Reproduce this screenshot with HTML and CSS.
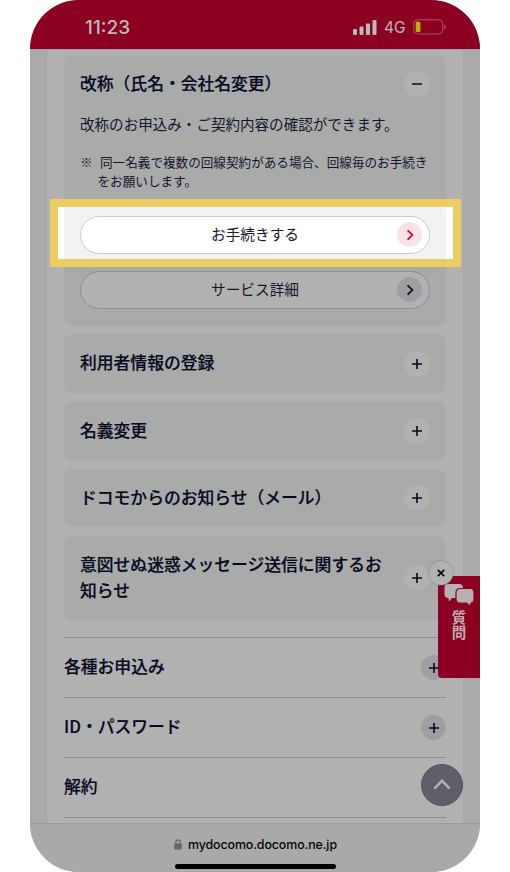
FILE: index.html
```html
<!DOCTYPE html>
<html lang="ja">
<head>
<meta charset="utf-8">
<meta name="viewport" content="width=device-width, initial-scale=1">
<title>My docomo お手続き</title>
<link rel="stylesheet" href="styles.css">
</head>
<body>

<div class="phone">
  <header class="status">
    <span class="time">11:23</span>
    <svg class="signal" width="24" height="15" viewBox="0 0 24 15">
      <rect x="0" y="9" width="4" height="6" rx="1"/>
      <rect x="6.5" y="6.5" width="4" height="8.5" rx="1"/>
      <rect x="13" y="3.5" width="4" height="11.5" rx="1"/>
      <rect x="19.5" y="0" width="4" height="15" rx="1"/>
    </svg>
    <span class="network">4G</span>
    <svg class="battery" width="34" height="16" viewBox="0 0 34 16">
      <rect class="case" x="0.75" y="0.75" width="29" height="14.2" rx="4"/>
      <rect class="charge" x="2.7" y="2.6" width="4.8" height="10.6" rx="2"/>
      <path class="cap" d="M31.2 5.2c2 .8 2 4.4 0 5.2z"/>
    </svg>
  </header>

  <main class="page">
    <div class="panel">
      <!-- 開いているメニュー -->
      <section class="card open">
        <div class="head">
          <h2>改称（氏名・会社名変更）</h2>
          <span class="circle"><svg width="12" height="12" viewBox="0 0 12 12"><path d="M1 6h10"/></svg></span>
        </div>
        <p class="lead">改称のお申込み・ご契約内容の確認ができます。</p>
        <p class="note"><span class="mark">※</span>同一名義で複数の回線契約がある場合、回線毎のお手続きをお願いします。</p>
        <div class="highlight">
          <div class="inner">
            <a class="button"><span class="label">お手続きする</span>
              <span class="arrow"><svg width="12" height="12" viewBox="0 0 12 12"><path d="M3.6 1.3L8.4 6l-4.8 4.7"/></svg></span>
            </a>
          </div>
        </div>
        <a class="button dim"><span class="label">サービス詳細</span>
          <span class="arrow"><svg width="12" height="12" viewBox="0 0 12 12"><path d="M3.6 1.3L8.4 6l-4.8 4.7"/></svg></span>
        </a>
      </section>

      <section class="card">
        <div class="head">
          <h2>利用者情報の登録</h2>
          <span class="circle"><svg width="12" height="12" viewBox="0 0 12 12"><path d="M1 6h10M6 1v10"/></svg></span>
        </div>
      </section>
      <section class="card">
        <div class="head">
          <h2>名義変更</h2>
          <span class="circle"><svg width="12" height="12" viewBox="0 0 12 12"><path d="M1 6h10M6 1v10"/></svg></span>
        </div>
      </section>
      <section class="card">
        <div class="head">
          <h2>ドコモからのお知らせ（メール）</h2>
          <span class="circle"><svg width="12" height="12" viewBox="0 0 12 12"><path d="M1 6h10M6 1v10"/></svg></span>
        </div>
      </section>
      <section class="card">
        <div class="head">
          <h2>意図せぬ迷惑メッセージ送信に関するお知らせ</h2>
          <span class="circle"><svg width="12" height="12" viewBox="0 0 12 12"><path d="M1 6h10M6 1v10"/></svg></span>
        </div>
      </section>

      <!-- カテゴリ -->
      <div class="categories">
        <div class="row">
          <h2>各種お申込み</h2>
          <span class="circle gray"><svg width="12" height="12" viewBox="0 0 12 12"><path d="M1 6h10M6 1v10"/></svg></span>
        </div>
        <div class="row">
          <h2>ID・パスワード</h2>
          <span class="circle gray"><svg width="12" height="12" viewBox="0 0 12 12"><path d="M1 6h10M6 1v10"/></svg></span>
        </div>
        <div class="row">
          <h2>解約</h2>
        </div>
        <div class="row"></div>
      </div>
    </div>
  </main>

  <footer class="browser">
    <div class="url">
      <svg width="8" height="11" viewBox="0 0 8 11">
        <rect x="0.3" y="4.6" width="7.4" height="5.9" rx="1"/>
        <path d="M1.9 5V3a2.1 2.1 0 0 1 4.2 0v2"/>
      </svg>
      <span>mydocomo.docomo.ne.jp</span>
    </div>
    <div class="home"></div>
  </footer>

  <!-- 画面に重なるボタン -->
  <div class="question">
    <svg width="31" height="24" viewBox="0 0 31 24">
      <path d="M4 1h11q4 0 4 4v6q0 4-4 4H8l-3 3.500L4.500 15Q.5 15 .5 11V5q0-4 3.500-4z"/>
      <path class="front" d="M16 5.500h10q4 0 4 4v6.500q0 4-3 4l-.5 3.500-4-3.500H16q-4 0-4-4V9.500q0-4 4-4z"/>
    </svg>
    <span>質問</span>
  </div>
  <div class="close"><svg width="8" height="8" viewBox="0 0 8 8"><path d="M.8.8l6.400 6.400M7.200.8L.8 7.200"/></svg></div>
  <div class="pagetop"><svg width="18" height="12" viewBox="0 0 18 12"><path d="M2 9.800l7-7 7 7"/></svg></div>
</div>

</body>
</html>
```

FILE: styles.css
```css
* {
  box-sizing: border-box;
}
body {
  margin: 0;
  background-color: #ffffff;
  color: #14162e;
  font-family: "Noto Sans CJK JP", sans-serif;
}
h2, p {
  margin: 0;
}
h2 {
  color: #07091f;
  font-size: 16.8px;
  line-height: 25.2px;
  font-weight: 500;
  -webkit-text-stroke: 0.2px #07091f;
}
svg {
  display: block;
  flex: none;
}
.phone {
  position: relative;
  display: flex;
  flex-direction: column;
  width: 450px;
  height: 872px;
  margin: 0 auto;
  border-radius: 49px;
  overflow: hidden;
  background-color: #a8abaa;
}

/* ステータスバー */
.status {
  display: flex;
  align-items: center;
  flex: none;
  height: 49px;
  padding: 5px 33px 0 55px;
  background-color: #8c0022;
  color: #bababa;
  font-family: Inter, sans-serif;
}
.time {
  flex: 1;
  font-size: 19px;
  font-weight: 500;
}
.signal {
  fill: #bababa;
}
.network {
  width: 21px;
  margin: 0 8px 0 7px;
  font-size: 15.5px;
}
.case {
  fill: none;
  stroke: #ae5267;
}
.charge {
  fill: #beb000;
}
.cap {
  fill: #ae5267;
}

.page {
  flex: 1;
  min-height: 0;
  overflow: hidden;
  padding: 1px 17px 0;
  box-shadow: inset 0 1px #aba0a2;
}
.panel {
  height: 100%;
  padding: 4.6px 17px 0;
  background-color: #b1b1b1;
  box-shadow: 0 0 2px #9fa2a1;
}
.card {
  margin-bottom: 8.5px;
  border-radius: 8px;
  background-color: #a8abaa;
}
.open {
  height: 271px;
}
.head {
  display: flex;
  align-items: center;
  justify-content: space-between;
  padding: 16.4px 16px 17.2px;
}
.head h2 {
  width: 310px;
}
.circle {
  display: flex;
  align-items: center;
  justify-content: center;
  flex: none;
  width: 26px;
  height: 26px;
  margin: 0 0 -1px;
  border-radius: 50%;
  background-color: #b1b1b2;
}
.circle path {
  fill: none;
  stroke: #07091f;
  stroke-width: 1.6;
}
.gray {
  background-color: #9f9fa3;
}
.lead {
  margin-top: -0.6px;
  padding-left: 16px;
  font-size: 14.56px;
  line-height: 22px;
}
.note {
  padding: 17px 16px 0 33.5px;
  font-size: 12.6px;
  line-height: 19px;
  text-indent: -17.5px;
}
.mark {
  display: inline-block;
  width: 20px;
  text-indent: 0;
}
.highlight {
  height: 68px;
  margin: 9.2px -15px 0 -14px;
  padding: 0 7px 0 6px;
  border: 8px solid #eccd62;
  background-color: #ffffff;
}
.inner {
  height: 52px;
  padding-top: 9px;
  background-color: #f1f2f4;
}
.button {
  display: flex;
  align-items: center;
  justify-content: center;
  position: relative;
  height: 38px;
  margin: 0 16px;
  border: 1px solid #c9c9d0;
  border-radius: 19px;
  background-color: #ffffff;
  font-size: 14.66px;
  line-height: 22px;
}
.label {
  margin-bottom: 2px;
}
.arrow {
  display: flex;
  align-items: center;
  justify-content: center;
  position: absolute;
  right: 7px;
  width: 25px;
  height: 25px;
  border-radius: 50%;
  background-color: #fae3e8;
}
.arrow path {
  fill: none;
  stroke: #cc0020;
  stroke-width: 1.7;
}
.dim {
  margin-top: 4px;
  border-color: #8d8e92;
  background-color: #b1b1b1;
}
.dim .arrow {
  background-color: #9f9fa3;
}
.dim .arrow path {
  stroke: #07091f;
}

.categories {
  margin-top: 17px;
}
.row {
  display: flex;
  align-items: center;
  justify-content: space-between;
  height: 60px;
  border-top: 1px solid #8d8d90;
}
.row h2 {
  margin-bottom: 2px;
}
.row .circle {
  width: 25px;
  height: 25px;
}

/* ブラウザの下部 */
.browser {
  flex: none;
  height: 49px;
  padding-top: 12px;
  border-top: 1px solid #9b9b9b;
  background-color: #a9a9a9;
}
.url {
  display: flex;
  align-items: center;
  justify-content: center;
  gap: 6px;
  height: 16px;
  padding-left: 1px;
  color: #050505;
  font-family: Inter, sans-serif;
  font-size: 12.4px;
  font-weight: 500;
  letter-spacing: -0.1px;
}
.url rect {
  fill: #656569;
}
.url path {
  fill: none;
  stroke: #656569;
  stroke-width: 1.2;
}
.home {
  width: 161px;
  height: 5px;
  margin: 12px auto 0;
  border-radius: 3px;
  background-color: #000000;
}

.question {
  position: absolute;
  top: 575.5px;
  right: 0;
  display: flex;
  flex-direction: column;
  align-items: center;
  width: 42px;
  height: 102px;
  padding-top: 7px;
  border-radius: 4px 0 0 4px;
  background-color: #8c0022;
}
.question path {
  fill: #b5b1b2;
}
.question .front {
  stroke: #8c0022;
  stroke-width: 1.2;
}
.question span {
  margin-top: 3px;
  color: #b9aeb1;
  font-size: 14.5px;
  line-height: 15px;
  letter-spacing: 1px;
  font-weight: bold;
  writing-mode: vertical-rl;
}
.close {
  position: absolute;
  top: 561px;
  left: 399px;
  display: flex;
  align-items: center;
  justify-content: center;
  width: 24px;
  height: 24px;
  border-radius: 50%;
  background-color: #b1b1b1;
  box-shadow: 0 0 2px #777777;
}
.close path {
  fill: none;
  stroke: #080808;
  stroke-width: 1.7;
}
.pagetop {
  position: absolute;
  top: 764px;
  left: 391px;
  display: flex;
  align-items: center;
  justify-content: center;
  width: 42px;
  height: 42px;
  padding-bottom: 2px;
  border: 1px solid #555463;
  border-radius: 50%;
  background-color: #5e5f69;
}
.pagetop path {
  fill: none;
  stroke: #b1b1b1;
  stroke-width: 2.5;
  stroke-linecap: round;
}
```
